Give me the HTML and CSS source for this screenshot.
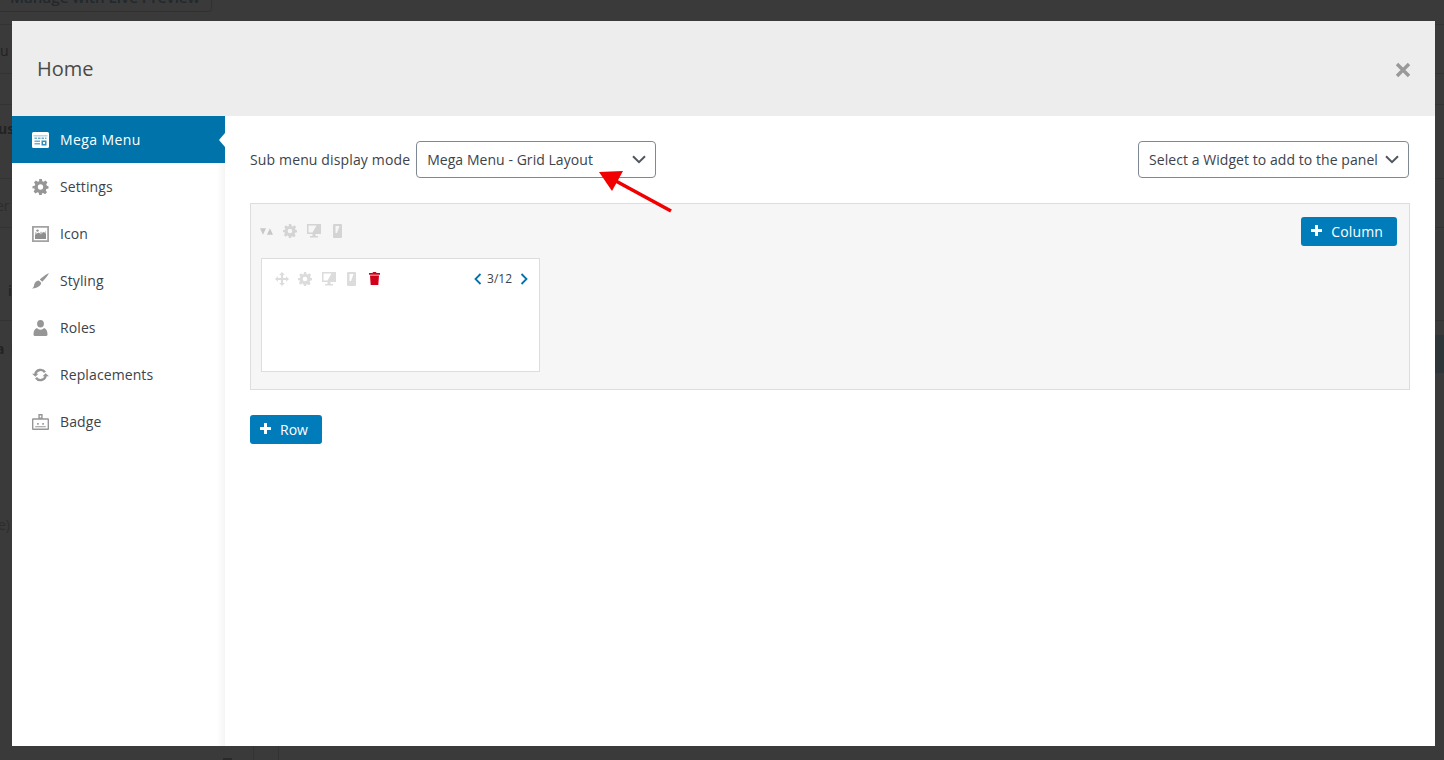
FILE: index.html
```html
<!DOCTYPE html>
<html lang="en">
<head>
	<meta charset="UTF-8">
	<title>Home - Mega Menu</title>
	<link rel="stylesheet" href="styles.css">
</head>
<body>
<!-- dimmed page behind the dialog -->
<div class="backdrop">
	<div class="bd-button">Manage with Live Preview</div>
	<span class="bd-txt bd-1">u</span>
	<span class="bd-txt bd-2">us</span>
	<span class="bd-txt bd-3">er</span>
	<span class="bd-txt bd-4">i</span>
	<span class="bd-txt bd-5">a l</span>
	<span class="bd-txt bd-6">e)</span>
	<span class="bd-line bd-l1"></span>
	<span class="bd-line bd-l2"></span>
	<span class="bd-line bd-l3"></span>
	<span class="bd-line bd-l4"></span>
	<span class="bd-line bd-l5"></span>
	<span class="bd-line bd-l6"></span>
	<span class="bd-block"></span>
	<span class="bd-foot bd-f1"></span>
	<span class="bd-foot bd-f2"></span>
	<span class="bd-tab"></span>
</div>

<div class="modal">
	<div class="modal-head">
		<h1>Home</h1>
		<svg class="close-x" viewBox="0 0 16 16"><path d="M2 2l12 12M14 2L2 14" stroke="#999" stroke-width="3.400" fill="none"/></svg>
	</div>
	<div class="modal-body">
		<ul class="side">
			<li class="side-item active">
				<svg class="ico" viewBox="0 0 17 16"><path fill="#fff" d="M1.500 0h14A1.500 1.500 0 0 1 17 1.500v13a1.500 1.500 0 0 1-1.500 1.500h-14A1.500 1.500 0 0 1 0 14.500v-13A1.500 1.500 0 0 1 1.500 0z"/><path fill="#6fb0cf" d="M1.500 3.500h14v.8h-14zM2.500 5.500H5V7H2.500zM6 5.500h2.500V7H6zM9.500 5.500H12V7H9.500zM13 5.500h1.500V7H13zM2.500 8.500H8V10H2.500zM2.500 11H8v1.500H2.500z"/><path fill="#2f90bd" d="M9.500 8.500h5v5h-5z"/><path fill="#fff" d="M11 10h2v2h-2z"/></svg>
				Mega Menu
			</li>
			<li class="side-item">
				<svg class="ico" viewBox="0 0 24 24"><path fill="#969696" fill-rule="evenodd" d="M10 0h4l.7 3.300 2 .8L19.600 2.300l2.800 2.800-1.800 2.900.8 2L24 10.700v3.600l-3.300.7-.8 2 1.800 2.900-2.800 2.800-2.900-1.800-2 .8L14 24h-4l-.7-3.300-2-.8-2.900 1.800-2.800-2.800 1.800-2.900-.8-2L0 14.300v-3.600L3.300 10l.8-2-1.800-2.900 2.800-2.800 2.900 1.800 2-.8zM12 8a4 4 0 1 0 0 8 4 4 0 0 0 0-8z"/></svg>
				Settings
			</li>
			<li class="side-item">
				<svg class="ico" viewBox="0 0 17 16"><path fill="#a2a2a2" fill-rule="evenodd" d="M0 0h17v16H0zM1.800 1.800v12.400h13.400V1.800z"/><path fill="#c4c4c4" d="M3 3h11v10H3z"/><path fill="#fff" d="M3 3h11v1.800L11.500 7 9 5.500 6.500 8 3 5.800z"/><path fill="#8e8e8e" d="M3 9l3.500-2.500L9 8.500l2.500-2.500L14 8v5H3z"/><circle cx="5.500" cy="4.600" r="1.200" fill="#8e8e8e"/></svg>
				Icon
			</li>
			<li class="side-item">
				<svg class="ico" viewBox="0 0 17 16"><path fill="#969696" d="M16.800.2c.4.500-3.800 6-6.500 8.600L7.800 6.500C10.500 3.800 16.200-.3 16.800.2zM6.800 7.500l2.400 2.300c-.3 2.600-2.300 5-9.200 5.800 2.200-1.300 1.800-3.400 2.800-5.600.8-1.600 2.400-2.400 4-2.500z"/></svg>
				Styling
			</li>
			<li class="side-item">
				<svg class="ico" viewBox="0 0 17 16"><ellipse cx="8.500" cy="3.800" rx="3.400" ry="3.800" fill="#969696"/><path fill="#969696" d="M3 16a1.500 1.500 0 0 1-1.500-1.500c0-3 .8-5.500 3.500-6.500 .9 1.100 2 1.700 3.500 1.700S11.100 9.100 12 8c2.700 1 3.500 3.500 3.500 6.500A1.500 1.500 0 0 1 14 16z"/></svg>
				Roles
			</li>
			<li class="side-item">
				<svg class="ico" viewBox="0 0 17 15"><path fill="none" stroke="#969696" stroke-width="2.400" d="M3.300 6.500A5.400 5.400 0 0 1 13 4.700M13.700 8.500A5.400 5.400 0 0 1 4 10.300"/><path fill="#969696" d="M0 6.300l3.400 3 3-3zM17 8.700l-3.400-3-3 3z"/></svg>
				Replacements
			</li>
			<li class="side-item">
				<svg class="ico" viewBox="0 0 16 15"><path fill="#969696" d="M6 0h4v4h5a1 1 0 0 1 1 1v9a1 1 0 0 1-1 1H1a1 1 0 0 1-1-1V5a1 1 0 0 1 1-1h5z"/><path fill="#fff" d="M7.300 1.300h1.400v2H7.300zM1.300 5.300h13.400v8.400H1.300z"/><path fill="#969696" d="M4.800 8.500h1.500V10H4.800zM9.700 8.500h1.500V10H9.700zM3 11.500h10v1H3z"/></svg>
				Badge
			</li>
		</ul>
		<div class="content">
			<div class="top-row">
				<label class="mode-label">Sub menu display mode</label>
				<div class="fake-select mode-select">
					<span>Mega Menu - Grid Layout</span>
					<svg class="chev" viewBox="0 0 14 9"><path d="M1 1.200l6 6 6-6" fill="none" stroke="#50575e" stroke-width="2"/></svg>
				</div>
				<div class="fake-select widget-select">
					<span>Select a Widget to add to the panel</span>
					<svg class="chev" viewBox="0 0 14 9"><path d="M1 1.200l6 6 6-6" fill="none" stroke="#50575e" stroke-width="2"/></svg>
				</div>
			</div>

			<div class="row-panel">
				<div class="row-tools">
					<div class="tools">
						<svg class="t-sort" viewBox="0 0 14 7"><path fill="#c8c8c8" d="M0 0h6.500L3.200 7zM7.500 7H14L10.700 0z"/></svg>
						<svg class="t-gear" viewBox="0 0 24 24"><path fill="#d4d4d4" fill-rule="evenodd" d="M10 0h4l.7 3.300 2 .8L19.600 2.300l2.800 2.800-1.800 2.900.8 2L24 10.700v3.600l-3.300.7-.8 2 1.800 2.900-2.800 2.800-2.900-1.800-2 .8L14 24h-4l-.7-3.300-2-.8-2.900 1.800-2.800-2.800 1.800-2.900-.8-2L0 14.300v-3.600L3.300 10l.8-2-1.800-2.900 2.800-2.800 2.900 1.800 2-.8zM12 8a4 4 0 1 0 0 8 4 4 0 0 0 0-8z"/></svg>
						<svg class="t-desk" viewBox="0 0 14 14"><path fill="#d4d4d4" fill-rule="evenodd" d="M0 0h14v10H8.500v2H11v1.500H3V12h2.500v-2H0zM1.500 1.500v7h4l4-7z"/></svg>
						<svg class="t-phone" viewBox="0 0 9 14"><path fill="#d4d4d4" fill-rule="evenodd" d="M1 0h7a1 1 0 0 1 1 1v12a1 1 0 0 1-1 1H1a1 1 0 0 1-1-1V1a1 1 0 0 1 1-1zM2.500 2v7h1.500l2.500-7z"/></svg>
					</div>
					<button class="btn btn-col"><span class="plus"></span>Column</button>
				</div>
				<div class="col-card">
					<div class="col-tools">
						<div class="tools">
							<svg class="t-move" viewBox="0 0 14 14"><path fill="#dcdcdc" d="M7 0l2.800 2.900H8.100v3h3V4.200L14 7l-2.900 2.800V8.100h-3v3h1.700L7 14l-2.800-2.900h1.700v-3h-3v1.700L0 7l2.900-2.800v1.700h3v-3H4.200z"/></svg>
							<svg class="t-gear" viewBox="0 0 24 24"><path fill="#dcdcdc" fill-rule="evenodd" d="M10 0h4l.7 3.300 2 .8L19.600 2.300l2.800 2.800-1.800 2.900.8 2L24 10.700v3.600l-3.300.7-.8 2 1.800 2.900-2.800 2.800-2.900-1.800-2 .8L14 24h-4l-.7-3.300-2-.8-2.900 1.800-2.800-2.800 1.800-2.900-.8-2L0 14.300v-3.600L3.300 10l.8-2-1.800-2.900 2.800-2.800 2.900 1.800 2-.8zM12 8a4 4 0 1 0 0 8 4 4 0 0 0 0-8z"/></svg>
							<svg class="t-desk" viewBox="0 0 14 14"><path fill="#dcdcdc" fill-rule="evenodd" d="M0 0h14v10H8.500v2H11v1.500H3V12h2.500v-2H0zM1.500 1.500v7h4l4-7z"/></svg>
							<svg class="t-phone" viewBox="0 0 9 14"><path fill="#dcdcdc" fill-rule="evenodd" d="M1 0h7a1 1 0 0 1 1 1v12a1 1 0 0 1-1 1H1a1 1 0 0 1-1-1V1a1 1 0 0 1 1-1zM2.500 2v7h1.500l2.500-7z"/></svg>
							<svg class="t-trash" viewBox="0 0 11 13"><path fill="#d0021b" d="M4 0h3l.5 1H11v1.800H0V1h3.500zM1 3.500h9L9.300 13H1.700z"/></svg>
						</div>
						<div class="span-ctrl">
							<svg class="arr" viewBox="0 0 8 12"><path d="M6.500 1L1.500 6l5 5" fill="none" stroke="#0073aa" stroke-width="1.800"/></svg>
							<span class="span-txt">3/12</span>
							<svg class="arr" viewBox="0 0 8 12"><path d="M1.500 1l5 5-5 5" fill="none" stroke="#0073aa" stroke-width="1.800"/></svg>
						</div>
					</div>
				</div>
			</div>

			<button class="btn btn-row"><span class="plus"></span>Row</button>
		</div>
	</div>
	<!-- red annotation arrow drawn over the dialog -->
	<svg class="annot" viewBox="0 0 80 50"><path d="M72 43L15 12" stroke="#f00000" stroke-width="3.600" fill="none"/><path fill="#f00000" d="M0 4l24-1-11 20z"/></svg>
</div>
</body>
</html>
```

FILE: styles.css
```css
*{
	box-sizing: border-box;
}
html,body{
	margin: 0;
	padding: 0;
	height: 760px;
	overflow: hidden;
}
body{
	background: #3a3a3a;
	font-family: "Open Sans", "Noto Sans", "Liberation Sans", sans-serif;
	font-size: 14px;
	color: #3c434a;
	padding: 21px 9px 14px 12px;
	position: relative;
}

/* page behind the overlay */
.backdrop{
	position: absolute;
	left: 0;
	top: 0;
	width: 1444px;
	height: 760px;
	overflow: hidden;
}
.bd-button{
	position: absolute;
	left: -2px;
	top: -17px;
	width: 214px;
	height: 29px;
	border: 1px solid #2c3236;
	border-radius: 3px;
	color: #22282c;
	font-size: 15.2px;
	font-weight: 600;
	line-height: 27px;
	text-align: center;
}
.bd-txt{
	position: absolute;
	color: #232323;
	font-size: 14px;
	font-weight: 600;
}
.bd-1{ left: 0; top: 41px; font-weight: 400; }
.bd-2{ left: -2px; top: 119px; font-weight: 700; }
.bd-3{ left: -4px; top: 196px; font-weight: 400; color: #2d2d2d; }
.bd-4{ left: 8px; top: 281px; }
.bd-5{ left: -4px; top: 339px; font-weight: 700; word-spacing: 3px; }
.bd-6{ left: -2px; top: 515px; font-weight: 400; color: #2d2d2d; }
.bd-line{
	position: absolute;
	left: 0;
	width: 100%;
	height: 1px;
	background: #333;
}
.bd-l1{ top: 73px; }
.bd-l2{ top: 104px; }
.bd-l3{ top: 178px; }
.bd-l4{ top: 227px; }
.bd-l5{ top: 320px; }
.bd-l6{ top: 24px; }
.bd-block{
	position: absolute;
	left: 1435px;
	top: 335px;
	width: 9px;
	height: 38px;
	background: #2e3538;
}
.bd-foot{
	position: absolute;
	top: 746px;
	width: 1px;
	height: 14px;
	background: #333;
}
.bd-f1{ left: 253px; }
.bd-f2{ left: 278px; }
.bd-tab{
	position: absolute;
	left: 223px;
	top: 758px;
	width: 9px;
	height: 2px;
	background: #2a2a2a;
}

.modal{
	position: relative;
	width: 1423px;
	height: 725px;
	background: #fff;
	display: flex;
	flex-direction: column;
}
.modal-head{
	height: 95px;
	background: #ededed;
	display: flex;
	align-items: center;
	justify-content: space-between;
	padding: 0 24px 0 25px;
	flex: none;
}
.modal-head h1{
	margin: 0;
	font-size: 20px;
	font-weight: 400;
	color: #4a4a4a;
}
.close-x{
	width: 16px;
	height: 16px;
	margin-top: 2px;
}
.modal-body{
	flex: 1;
	display: flex;
}

.side{
	list-style: none;
	margin: 0;
	padding: 0;
	width: 213px;
	flex: none;
	background: linear-gradient(to right, #fff 205px, #f5f5f5 213px);
}
.side-item{
	height: 47px;
	display: flex;
	align-items: center;
	padding-left: 20px;
	letter-spacing: .1px;
	position: relative;
}
.side-item.active{
	background: #0073aa;
	color: #fff;
	letter-spacing: .4px;
}
.side-item.active:after{
	content: "";
	position: absolute;
	right: 0;
	top: 17px;
	border-top: 7px solid transparent;
	border-bottom: 7px solid transparent;
	border-right: 6px solid #fff;
}
.ico{
	width: 17px;
	height: 16px;
	margin-right: 11px;
	flex: none;
}

.content{
	flex: 1;
	padding: 25px 25px 0 25px;
}
.top-row{
	display: flex;
	align-items: center;
	height: 37px;
}
.mode-label{
	margin-right: 6px;
	letter-spacing: .14px;
}
.fake-select{
	height: 37px;
	border: 1px solid #7e8993;
	border-radius: 4px;
	background: #fff;
	display: flex;
	align-items: center;
	justify-content: space-between;
	padding: 0 9px 0 10px;
}
.mode-select{
	width: 240px;
	letter-spacing: .05px;
}
.widget-select{
	width: 271px;
	margin-left: auto;
	margin-right: 1px;
	letter-spacing: .06px;
}
.chev{
	width: 14px;
	height: 9px;
	flex: none;
}

.row-panel{
	margin-top: 25px;
	height: 187px;
	background: #f6f6f6;
	border: 1px solid #ddd;
	padding: 13px 12px 0 10px;
}
.row-tools{
	display: flex;
	justify-content: space-between;
	align-items: center;
	height: 29px;
}
.tools{
	display: flex;
	align-items: center;
}
.tools svg{
	flex: none;
}
.t-sort{
	width: 13px;
	height: 7px;
}
.t-gear{
	width: 14px;
	height: 14px;
}
.t-desk{
	width: 14px;
	height: 14px;
}
.t-phone{
	width: 9px;
	height: 14px;
}
.t-move{
	width: 14px;
	height: 14px;
}
.t-trash{
	width: 11px;
	height: 13px;
}
.row-tools .tools{
	gap: 10px;
	margin-left: -1px;
	margin-top: -1px;
}
.row-tools .t-phone{
	margin-left: 2px;
}
.btn{
	height: 29px;
	padding: 0 14px 0 10px;
	background: #007cba;
	border: 0;
	border-radius: 3px;
	color: #fff;
	font-family: inherit;
	font-size: 14px;
	display: inline-flex;
	align-items: center;
}
.btn-col{
	letter-spacing: .15px;
}
.plus{
	width: 11px;
	height: 11px;
	margin-right: 9px;
	margin-top: -2px;
	background: linear-gradient(#fff, #fff) center / 100% 3px no-repeat, linear-gradient(#fff, #fff) center / 3px 100% no-repeat;
}
.btn-row{
	margin-top: 25px;
}

.col-card{
	width: 279px;
	height: 114px;
	margin-top: 12px;
	background: #fff;
	border: 1px solid #ddd;
	padding: 12px 11px 0 13px;
}
.col-tools{
	display: flex;
	justify-content: space-between;
	align-items: center;
	height: 15px;
}
.col-tools .tools{
	gap: 9px;
}
.col-tools .t-desk{
	margin-left: 1px;
}
.col-tools .t-phone{
	margin-left: 2px;
}
.col-tools .t-trash{
	margin-left: 4px;
}
.span-ctrl{
	display: flex;
	align-items: center;
	gap: 5px;
}
.span-txt{
	font-size: 12px;
	margin-right: 3px;
}
.arr{
	width: 8px;
	height: 12px;
}

.annot{
	position: absolute;
	left: 587px;
	top: 147px;
	width: 80px;
	height: 50px;
}
```
